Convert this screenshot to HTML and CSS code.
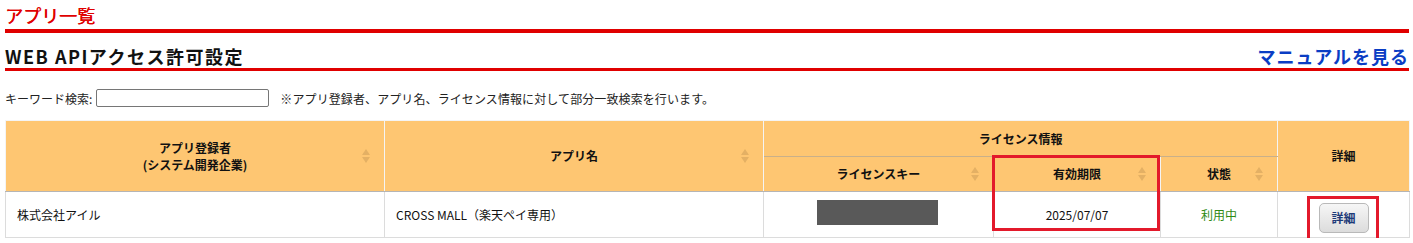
FILE: index.html
```html
<!DOCTYPE html>
<html lang="ja">
<head>
<meta charset="utf-8">
<link rel="stylesheet" href="styles.css">
</head>
<body>
<div class="page">
  <h1 class="page-title">アプリ一覧</h1>
  <div class="section-head">
    <h2 class="section-title">WEB APIアクセス許可設定</h2>
    <a class="manual-link" href="#">マニュアルを見る</a>
  </div>
  <div class="search-row">
    <label class="search-label">キーワード検索:</label>
    <input class="search-input" type="text">
    <span class="search-note">※アプリ登録者、アプリ名、ライセンス情報に対して部分一致検索を行います。</span>
  </div>
  <div class="table-wrap">
    <table class="app-table">
      <colgroup>
        <col class="c1"><col class="c2"><col class="c3"><col class="c4"><col class="c5"><col class="c6">
      </colgroup>
      <thead>
        <tr class="hr1">
          <th rowspan="2" class="sortable"><span class="hline">アプリ登録者</span><span class="hline">(システム開発企業)</span><span class="sort"></span></th>
          <th rowspan="2" class="sortable">アプリ名<span class="sort"></span></th>
          <th colspan="3">ライセンス情報</th>
          <th rowspan="2">詳細</th>
        </tr>
        <tr class="hr2">
          <th class="sortable">ライセンスキー<span class="sort"></span></th>
          <th class="sortable">有効期限<span class="sort"></span></th>
          <th class="sortable">状態<span class="sort"></span></th>
        </tr>
      </thead>
      <tbody>
        <tr>
          <td class="left">株式会社アイル</td>
          <td class="left">CROSS MALL（楽天ペイ専用）</td>
          <td class="center"><span class="masked"></span></td>
          <td class="center">2025/07/07</td>
          <td class="center status">利用中</td>
          <td class="center"><button class="detail-btn">詳細</button></td>
        </tr>
      </tbody>
    </table>
    <div class="highlight hl-date"></div>
    <div class="highlight hl-btn"></div>
  </div>
</div>
</body>
</html>
```

FILE: styles.css
```css
html, body {
  margin: 0;
  padding: 0;
  background: #fff;
}
body {
  font-family: "Noto Sans CJK JP", "Noto Sans", sans-serif;
  font-size: 12px;
  color: #222;
}
.page {
  padding: 0 5px 0 5px;
  width: 1404px;
}
.page-title {
  margin: 0;
  padding-top: 3px;
  height: 26px;
  font-size: 18px;
  line-height: 24px;
  font-weight: normal;
  color: #e00000;
  border-bottom: 4px solid #e00000;
  text-shadow: 0.4px 0 0 #e00000;
}
.section-head {
  display: flex;
  justify-content: space-between;
  align-items: flex-end;
  margin-top: 10px;
  border-bottom: 3px solid #e00000;
  height: 25px;
}
.section-title {
  margin: 0;
  font-size: 18px;
  line-height: 24px;
  font-weight: bold;
  color: #111;
  letter-spacing: 1.5px;
}
.manual-link {
  font-size: 18px;
  line-height: 24px;
  font-weight: bold;
  color: #0a3dc4;
  text-decoration: none;
  letter-spacing: 1px;
}
.search-row {
  display: flex;
  align-items: center;
  margin-top: 17px;
  height: 20px;
}
.search-label {
  color: #222;
}
.search-input {
  margin: 0 0 0 4px;
  width: 173px;
  height: 18px;
  box-sizing: border-box;
  border: 1px solid #767676;
  border-radius: 2px;
  padding: 0;
}
.search-note {
  margin-left: 11px;
  letter-spacing: 0.1px;
}
.table-wrap {
  position: relative;
  margin-top: 12px;
}
.app-table {
  width: 1404px;
  border-collapse: collapse;
  table-layout: fixed;
  border: 1px solid #dcdcdc;
}
.c1 { width: 379px; }
.c2 { width: 379px; }
.c3 { width: 230px; }
.c4 { width: 167px; }
.c5 { width: 117px; }
.c6 { width: 132px; }
.app-table th {
  background: #fec672;
  font-weight: bold;
  color: #111;
  font-size: 12px;
  line-height: 14px;
  text-align: center;
  border: 1px solid #f4f4f4;
  position: relative;
  padding: 0;
}
.hline {
  display: block;
  height: 17px;
  line-height: 17px;
}
.hr1 th { height: 35px; }
.hr2 th { height: 34px; border-top: 1px solid #c9ab80; }
.hr1 th[colspan] { border-bottom: 1px solid #c9b08a; }
thead tr:last-child th, .hr1 th[rowspan] { border-bottom: 1px solid #b5b5b5; }
.sort {
  position: absolute;
  right: 13px;
  top: 50%;
  margin-top: -8px;
  width: 9px;
  height: 16px;
}
.sort::before, .sort::after {
  content: "";
  position: absolute;
  left: 0;
  border-left: 4.5px solid transparent;
  border-right: 4.5px solid transparent;
}
.sort::before {
  top: 1px;
  border-bottom: 6px solid #e4b064;
}
.sort::after {
  bottom: 1px;
  border-top: 6px solid #e4b064;
}
.app-table td {
  height: 45px;
  border: 1px solid #dcdcdc;
  border-top: none;
  padding: 0;
  color: #111;
  vertical-align: middle;
}
.app-table td.left { padding-left: 11px; }
.app-table td.center { text-align: center; }
.status { color: #2e8a12 !important; }
.masked {
  display: inline-block;
  width: 121px;
  height: 25px;
  background: #595959;
  vertical-align: middle;
  margin-left: -3px;
  margin-top: -6px;
}
.detail-btn {
  width: 50px;
  height: 30px;
  border: 1px solid #b9b9b9;
  border-radius: 5px;
  background: linear-gradient(#f6f6f6, #dcdcdc);
  font-family: "Noto Sans CJK JP", sans-serif;
  font-size: 12px;
  font-weight: bold;
  color: #1d3a78;
  padding: 0;
  margin-top: 6px;
}
.highlight {
  position: absolute;
  border: 3px solid #e3192b;
  box-sizing: border-box;
}
.hl-date {
  left: 987px;
  top: 35px;
  width: 168px;
  height: 76px;
}
.hl-btn {
  left: 1302px;
  top: 76px;
  width: 72px;
  height: 50px;
}
```
